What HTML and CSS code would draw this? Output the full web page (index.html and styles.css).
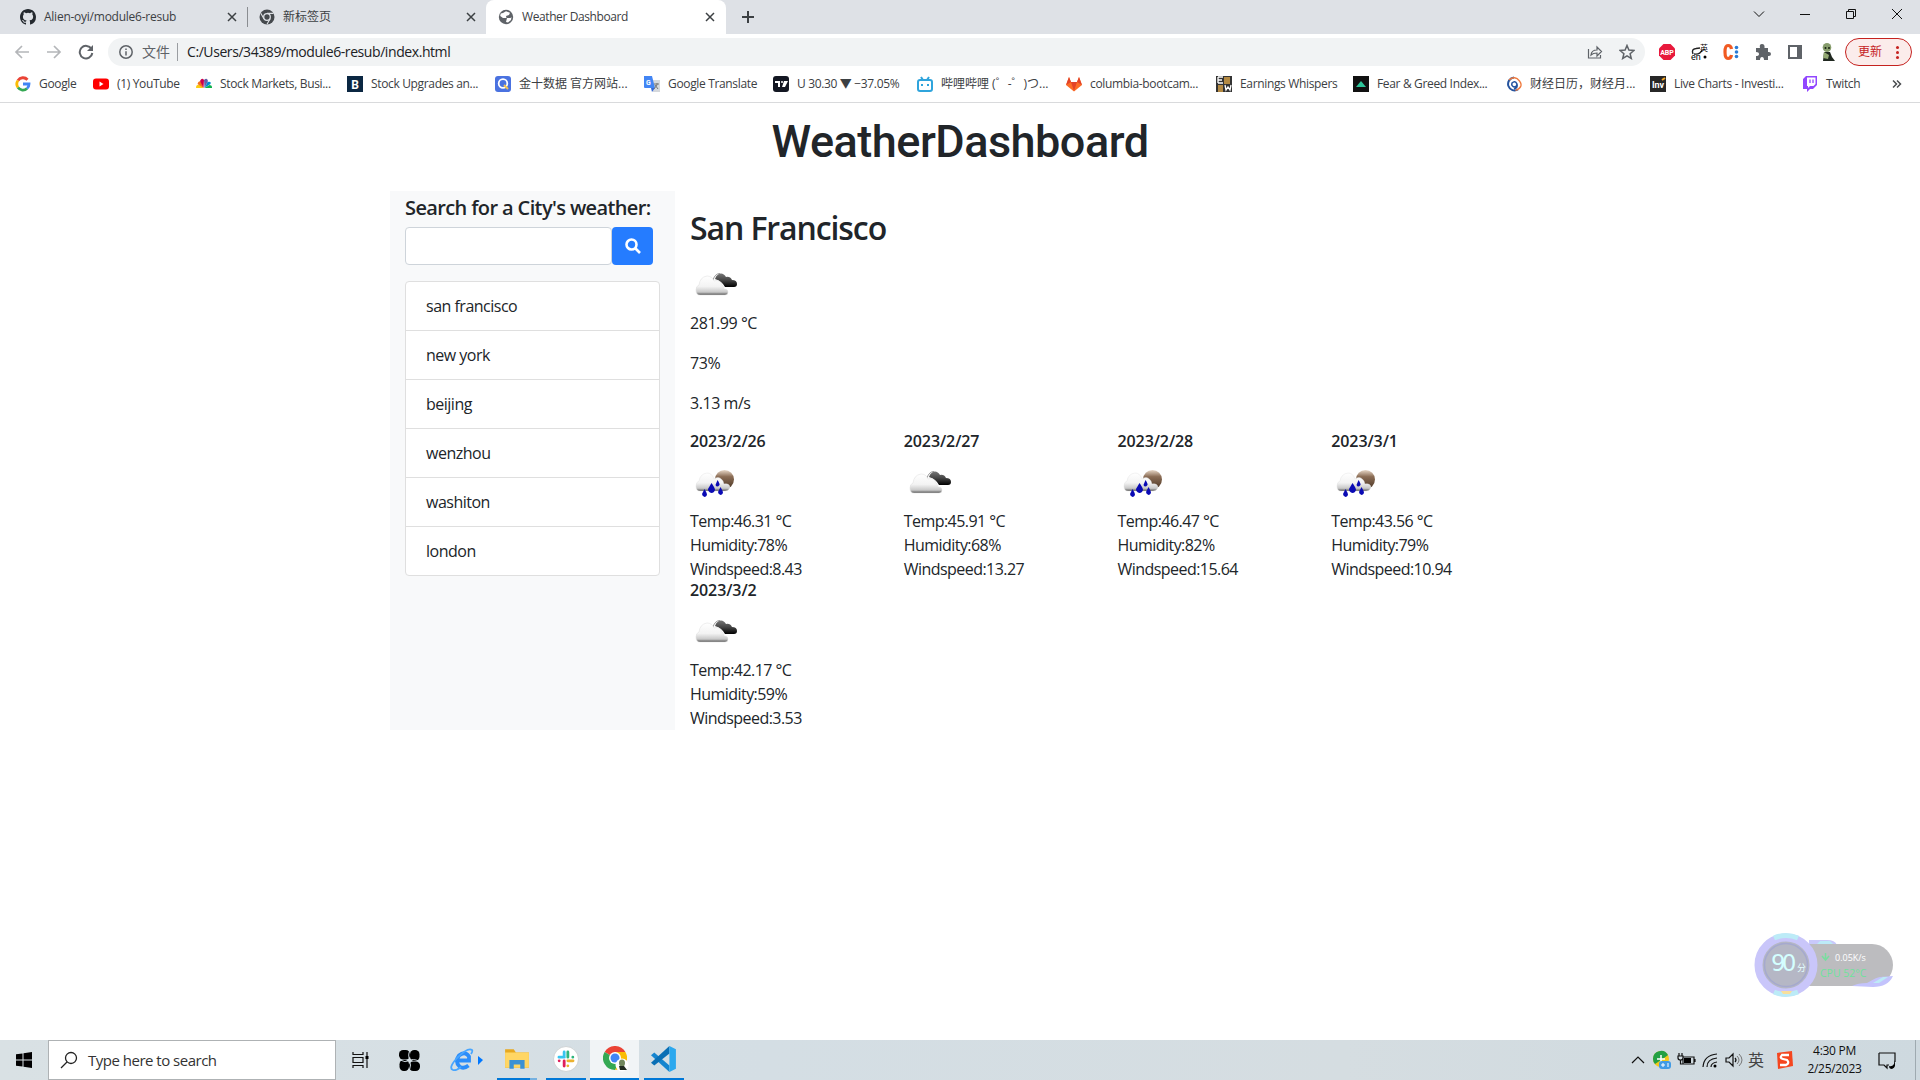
FILE: index.html
```html
<!DOCTYPE html>
<html lang="en">
<head>
<meta charset="utf-8">
<title>Weather Dashboard</title>
<link rel="stylesheet" href="styles.css">
</head>
<body>
<svg class="defs" width="0" height="0">
  <defs>
    <linearGradient id="white-cloud" x1="0" y1="0" x2="0" y2="1"><stop offset="0" stop-color="#fff"/><stop offset=".55" stop-color="#f3f3f3"/><stop offset=".85" stop-color="#c8c8c8"/><stop offset="1" stop-color="#555"/></linearGradient>
    <linearGradient id="dark-cloud" x1="0" y1="0" x2="0" y2="1"><stop offset="0" stop-color="#777"/><stop offset=".5" stop-color="#444"/><stop offset="1" stop-color="#000"/></linearGradient>
    <linearGradient id="moon" x1="0" y1="0" x2="0" y2="1"><stop offset="0" stop-color="#e8d8c8"/><stop offset=".35" stop-color="#8b6d55"/><stop offset="1" stop-color="#4a3524"/></linearGradient>
    <symbol id="clouds" viewBox="0 0 50 50">
      <path d="M25 18 Q27 12.500 31 12.500 Q34 12.500 36 16 Q40 15 42 19 Q47 19 47 23 Q47 26 44 26 H35 Q32 20 25 18Z" fill="url(#dark-cloud)"/>
      <path d="M23 19 Q25 12.500 30 12.500" fill="none" stroke="#999"/>
      <path d="M10 34 Q6 34 6 29 Q6 25 9 24 Q10 16 17 15 Q22 15 24 20 Q30 18 32 24 Q34 26 34 28 Q38 28 38 31 Q38 34 35 34Z" fill="url(#white-cloud)" stroke="#ddd" stroke-width=".5"/>
    </symbol>
    <symbol id="rain" viewBox="0 0 50 50">
      <circle cx="34.500" cy="20.500" r="9.500" fill="url(#moon)"/>
      <path d="M10 32 Q6 32 6 27 Q6 23 9 22 Q10 15 17 14 Q22 14 24 20 Q29 16 33 22 L34 25 Q39 24 40 28 Q39 32 35 32Z" fill="url(#white-cloud)" stroke="#ddd" stroke-width=".4"/>
      <g fill="#0a0ab4"><path d="M21.500 24 Q25 29 25 31 Q24 34 21.500 34 Q18 33 18 30Z"/><path d="M14.500 30 Q17 34 17 36 Q16 38 14.500 38 Q12 37 12 35Z"/><path d="M27.500 21 Q30 25 29.500 26 Q27 29 25.500 26Z"/><path d="M30.500 28 Q33 32 33 34 Q32 36 30.500 36 Q28 35 28 33Z"/></g>
    </symbol>
    <symbol id="chrome" viewBox="0 0 24 24">
      <path d="M12 12 L1.600 6 A12 12 0 0 1 22.400 6 H12Z" fill="#ea4335"/><path d="M12 12 L1.600 6 A12 12 0 0 0 12 24 L17.200 15Z" fill="#34a853"/><path d="M12 6 H22.400 A12 12 0 0 1 12 24 L17.200 15Z" fill="#fbbc04"/><circle cx="12" cy="12" r="6" fill="#fff"/><circle cx="12" cy="12" r="4.500" fill="#4285f4"/>
    </symbol>
  </defs>
</svg>

<header class="browser">
  <div class="tabs">
    <div class="tab tab-one">
      <svg class="fav" viewBox="0 0 16 16"><path fill="#24292f" d="M8 0C3.580 0 0 3.580 0 8c0 3.540 2.290 6.530 5.470 7.590.4.070.55-.17.55-.38v-1.490c-2.010.37-2.530-.49-2.690-.94-.09-.23-.48-.94-.82-1.130-.28-.15-.68-.52-.01-.53.63-.01 1.080.58 1.230.82.72 1.210 1.870.87 2.330.66.07-.52.28-.87.51-1.070-1.780-.2-3.640-.89-3.640-3.950 0-.87.31-1.590.82-2.150-.08-.2-.36-1.020.08-2.120 0 0 .67-.21 2.200.82a7.600 7.600 0 0 1 4 0c1.530-1.040 2.200-.82 2.200-.82.44 1.100.16 1.920.08 2.120.51.56.82 1.270.82 2.150 0 3.070-1.870 3.750-3.650 3.950.29.25.54.73.54 1.480v2.200c0 .21.15.46.55.38A8 8 0 0 0 16 8c0-4.420-3.580-8-8-8z"/></svg>
      <span class="tab-title">Alien-oyi/module6-resub</span>
      <svg class="close" viewBox="0 0 10 10"><path d="M1 1l8 8M9 1l-8 8"/></svg>
    </div>
    <div class="tab tab-two">
      <svg class="fav" viewBox="0 0 16 16"><circle cx="8" cy="8" r="7.500" fill="#45494d"/><circle cx="8" cy="8" r="3.300" fill="#45494d" stroke="#dee1e6" stroke-width="1.300"/><path d="M8 4.400h6.500M4.900 9.700L1.800 4.300M11.100 9.800L8 15.300" stroke="#dee1e6" stroke-width="1.100"/></svg>
      <span class="tab-title cjk">新标签页</span>
      <svg class="close" viewBox="0 0 10 10"><path d="M1 1l8 8M9 1l-8 8"/></svg>
    </div>
    <div class="tab tab-three active">
      <svg class="fav" viewBox="0 0 16 16"><circle cx="8" cy="8" r="7.200" fill="#5f6368"/><path d="M8 2.200l4 1.500-1 2.300-3 1 .5 2H5L2.200 7l.5-2.500L5 4zM9 9h3.500l1-1-.5 3-3 2.500-2-.5z" fill="#fff"/></svg>
      <span class="tab-title">Weather Dashboard</span>
      <svg class="close" viewBox="0 0 10 10"><path d="M1 1l8 8M9 1l-8 8"/></svg>
    </div>
    <svg class="new-tab" viewBox="0 0 14 14"><path d="M7 1v12M1 7h12"/></svg>
    <div class="window-buttons">
      <svg viewBox="0 0 12 12"><path d="M1 3.500l5 5 5-5"/></svg>
      <svg viewBox="0 0 12 12"><path d="M1 6.500h10"/></svg>
      <svg viewBox="0 0 12 12"><path d="M1.500 3.500h7v7h-7zM3.500 3.500v-2h7v7h-2"/></svg>
      <svg viewBox="0 0 12 12"><path d="M1 1l10 10M11 1L1 11"/></svg>
    </div>
  </div>

  <div class="toolbar">
    <div class="nav">
      <svg class="dim" viewBox="0 0 16 16"><path d="M15 8H2M8 2L2 8l6 6"/></svg>
      <svg class="dim" viewBox="0 0 16 16"><path d="M1 8h13M8 2l6 6-6 6"/></svg>
      <svg viewBox="0 0 16 16"><path d="M13.500 5A6.300 6.300 0 1 0 14.300 9"/><path d="M15 1v6H9z" fill="#5f6368" stroke="none"/></svg>
    </div>
    <div class="omnibox">
      <svg class="info" viewBox="0 0 16 16"><circle cx="8" cy="8" r="6.200"/><path d="M8 7.300V11.500M8 4.500v1.500"/></svg>
      <span class="scheme">文件</span>
      <span class="url">C:/Users/34389/module6-resub/index.html</span>
      <svg class="action" viewBox="0 0 16 16"><path d="M1.500 5v9h12v-3M4 11q.5-5 6-5V3l4.500 4.500L10 12V9q-4 0-6 2z"/></svg>
      <svg class="action star" viewBox="0 0 16 16"><path d="M8 1.500l1.900 4.600 5 .4-3.800 3.200 1.200 4.800L8 11.900l-4.300 2.600 1.200-4.800L1.100 6.500l5-.4z"/></svg>
    </div>
    <div class="extensions">
      <svg viewBox="0 0 18 18"><path d="M5.500 1h7L17 5.500v7L12.500 17h-7L1 12.500v-7z" fill="#e8193c"/><text x="9" y="11.800" class="abp">ABP</text></svg>
      <svg viewBox="0 0 18 18"><path d="M3 11Q1 6 6 5.500L10 5M4 11q6 1 8-4" stroke="#222" stroke-width="1.400" fill="none"/><text x="10" y="8" class="hanzi">英</text><text x="1" y="17" class="en">en</text><circle cx="15" cy="14" r="1.500"/></svg>
      <svg viewBox="0 0 18 18"><path d="M9.500 6Q9 2.500 6 2.500 3 2.500 3 9t3 6.500q3 0 3.500-3.500" fill="none" stroke="#f15a22" stroke-width="3.200"/><g fill="#2a7bd5"><circle cx="14.500" cy="4.500" r="1.800"/><circle cx="14.500" cy="9" r="1.800"/><circle cx="14.500" cy="13.500" r="1.800"/></g></svg>
      <svg viewBox="0 0 18 18"><path fill="#5f6368" d="M2 5h4Q5 1 8 1t2.500 4H14v4q3-.5 3 2t-3 2v4h-4q0-3-2-3t-2 3H2v-4q3 0 3-2T2 9z"/></svg>
      <svg viewBox="0 0 18 18"><path d="M3 3h12v12H3z" fill="none" stroke="#5f6368" stroke-width="2"/><path d="M11 3h4v12h-4z" fill="#5f6368"/></svg>
      <svg viewBox="0 0 18 18"><ellipse cx="9" cy="4.500" rx="4.300" ry="4.500" fill="#869c6c"/><path d="M6 9h6l2 5 3 4H5z" fill="#202820"/><path d="M6 9l5 3-1 4-5-1z" fill="#93a873"/><circle cx="7.500" cy="5" r="1" fill="#15200f"/><circle cx="11" cy="5" r="1" fill="#15200f"/></svg>
    </div>
    <div class="update"><span>更新</span><i></i></div>
  </div>

  <nav class="bookmarks">
    <a><svg viewBox="0 0 16 16" fill="none" stroke-width="2.800"><path d="M3 4.500a6 6 0 0 1 9.500-.8" stroke="#ea4335"/><path d="M3 11.500a6 6 0 0 1 0-7" stroke="#fbbc04"/><path d="M12 12.500a6 6 0 0 1-9-1" stroke="#34a853"/><path d="M8 8h6q0 3-2 4.500" stroke="#4285f4"/></svg>Google</a>
    <a><svg viewBox="0 0 16 16"><rect y="2.500" width="16" height="11" rx="3" fill="#f00"/><path d="M6.500 5.500v5l4-2.500z" fill="#fff"/></svg>(1) YouTube</a>
    <a><svg viewBox="0 0 16 16"><path d="M7.500 12L0 12q0-4 4-3z" fill="#fccc12"/><path d="M7.500 12L1.500 8q1-4 4-2z" fill="#f37021"/><path d="M7.500 12L4 5q2-4 4-1z" fill="#cc004c"/><path d="M8.500 12L8 4q3-3 4 1z" fill="#6460aa"/><path d="M8.500 12l3-6q4-1 3 2z" fill="#0089d0"/><path d="M8.500 12l5-3q3 0 2.500 3z" fill="#0db14b"/></svg>Stock Markets, Busi...</a>
    <a><svg viewBox="0 0 16 16"><path fill="#0b2742" d="M0 0h16v16H0z"/><text x="8" y="12.500" class="mark">B</text></svg>Stock Upgrades an...</a>
    <a class="cjk"><svg viewBox="0 0 16 16"><rect width="16" height="16" rx="3" fill="#4a72e0"/><circle cx="8" cy="7.500" r="4.300" fill="none" stroke="#fff" stroke-width="1.800"/><path d="M9 9l4 4" stroke="#f6c44e" stroke-width="2"/></svg>金十数据 官方网站...</a>
    <a><svg viewBox="0 0 16 16"><path fill="#d5d8dc" d="M6 4h10v12H9z"/><path fill="#4285f4" d="M0 0h8l3 12H1q-1 0-1-1z"/><path fill="#3367d6" d="M7 12h4l-3 4z"/><text x="4.500" y="9" class="tiny">G</text><path d="M10 8h5m-2-1v2l-3 4m1-4l3 4" stroke="#777" fill="none"/></svg>Google Translate</a>
    <a><svg viewBox="0 0 16 16"><rect width="16" height="16" rx="3" fill="#131722"/><path d="M2 5h5v6H5V7H2zM11 5h4l-3 6H9z" fill="#fff"/><circle cx="9" cy="6" r="1" fill="#fff"/></svg>U 30.30 ▼ −37.05%</a>
    <a class="cjk"><svg viewBox="0 0 16 16" fill="none" stroke="#2fa4dc" stroke-width="2"><rect x="1" y="4" width="14" height="11" rx="2"/><path d="M4 1l2 3M12 1l-2 3M5 8v2M11 8v2"/></svg>哔哩哔哩 (゜-゜)つ...</a>
    <a><svg viewBox="0 0 16 16"><path d="M0 9l3-8 2 5h6l2-5 3 8-8 6.500z" fill="#fc6d26"/><path d="M5 6h6l-3 9z" fill="#e24329"/><path d="M0 9l3-8 2 5zM16 9l-3-8-2 5z" fill="#e24329"/></svg>columbia-bootcam...</a>
    <a><svg viewBox="0 0 16 16"><path fill="#333" d="M0 0h16v16H0z"/><path fill="#b48a43" d="M8 1h6v7H8zM2 9h5v7H2z"/><path d="M2 1h5M2 4h4M2 7h5M2 1v6M9 9l1 5 2-3 2 3 1-5" stroke="#fff" fill="none" stroke-width="1.300"/></svg>Earnings Whispers</a>
    <a><svg viewBox="0 0 16 16"><path fill="#111" d="M0 0h16v16H0z"/><path d="M8 5l5 6H3z" fill="#2dc59a"/></svg>Fear &amp; Greed Index...</a>
    <a class="cjk"><svg viewBox="0 0 16 16" fill="none" stroke-width="2"><path d="M12 13.500a6.500 6.500 0 1 1-4-12" stroke="#25549f"/><path d="M3 4q6-5 10.500 1t-4 9.500" stroke="#ef793d" stroke-width="1.300"/><path d="M11 8q0 3-3 3-3-1-2-4 3-3 5 1 1 4-3 5" stroke="#25549f" stroke-width="1.500"/></svg>财经日历，财经月...</a>
    <a><svg viewBox="0 0 16 16"><path fill="#272727" d="M0 0h16v16H0z"/><text x="8" y="12" class="inv">Inv</text><path d="M12 4l3-2" stroke="#f5a623" stroke-width="2"/></svg>Live Charts - Investi...</a>
    <a><svg viewBox="0 0 16 16"><path d="M4 0h11v9l-4 4H8l-3 3v-3H1V3z" fill="#9146ff"/><path d="M5 1.500h8.500V8l-2 2H8l-2 2v-2H5z" fill="#fff"/><path d="M8 3.500v3.500M11 3.500v3.500" stroke="#9146ff" stroke-width="1.300"/></svg>Twitch</a>
    <svg class="more" viewBox="0 0 10 10"><path d="M1 1.500L4.500 5 1 8.500M5 1.500L8.500 5 5 8.500"/></svg>
  </nav>
</header>

<main class="page">
  <h1>WeatherDashboard</h1>
  <div class="columns">
    <aside>
      <h5>Search for a City's weather:</h5>
      <div class="search">
        <input type="text" aria-label="City">
        <button aria-label="Search"><svg viewBox="0 0 16 16"><circle cx="6.500" cy="6.500" r="5"/><path d="M10 10l5 5"/></svg></button>
      </div>
      <ul>
        <li>san francisco</li><li>new york</li><li>beijing</li><li>wenzhou</li><li>washiton</li><li>london</li>
      </ul>
    </aside>
    <section class="weather">
      <h2>San Francisco</h2>
      <svg class="icon"><use href="#clouds"/></svg>
      <p>281.99 °C</p>
      <p>73%</p>
      <p>3.13 m/s</p>
      <div class="forecast">
        <article><h6>2023/2/26</h6><svg class="icon"><use href="#rain"/></svg><div>Temp:46.31 °C</div><div>Humidity:78%</div><div>Windspeed:8.43</div></article>
        <article><h6>2023/2/27</h6><svg class="icon"><use href="#clouds"/></svg><div>Temp:45.91 °C</div><div>Humidity:68%</div><div>Windspeed:13.27</div></article>
        <article><h6>2023/2/28</h6><svg class="icon"><use href="#rain"/></svg><div>Temp:46.47 °C</div><div>Humidity:82%</div><div>Windspeed:15.64</div></article>
        <article><h6>2023/3/1</h6><svg class="icon"><use href="#rain"/></svg><div>Temp:43.56 °C</div><div>Humidity:79%</div><div>Windspeed:10.94</div></article>
        <article><h6>2023/3/2</h6><svg class="icon"><use href="#clouds"/></svg><div>Temp:42.17 °C</div><div>Humidity:59%</div><div>Windspeed:3.53</div></article>
      </div>
    </section>
  </div>
</main>

<div class="monitor">
  <svg viewBox="0 0 142 66">
    <path d="M55 3h18q8 0 10 5H55z" fill="#c9c9fb"/><path d="M66 4h10l3 3H63z" fill="#bcebf8"/>
    <path d="M45 7h73a21 21 0 0 1 0 42H45z" fill="#bcbcbf"/>
    <path d="M98 49q6-3 15-3 10-6 13-6l13-1q-5 11-20 11z" fill="#c3c3fc"/><path d="M119 46l10-6h5l-9 6z" fill="#bdeaf6"/>
    <circle cx="32" cy="28" r="27.500" fill="#b5b7c5" stroke="#c9c6fa" stroke-width="8"/>
    <path d="M20 1q12-5 24 0M20 55q12 5 24 0" fill="none" stroke="#bcebf7" stroke-width="5"/>
    <circle cx="32" cy="28" r="21.500" fill="none" stroke="#a5a9ce" stroke-width="1.500"/>
    <path d="M27 54h11l-2 3h-7z" fill="#f8df9c"/>
    <path d="M71.500 16v6M68 19l3.500 4 3.500-4" fill="none" stroke="#79dd9f" stroke-width="1.500"/>
    <text x="17" y="34" class="score">90</text><text x="43" y="34" class="unit">分</text>
    <text x="81" y="24" class="speed">0.05K/s</text><text x="66" y="40" class="cpu">CPU 52°C</text>
  </svg>
</div>

<footer class="taskbar">
  <div class="start"><svg viewBox="0 0 16 16"><path d="M0 2.300L6.500 1.400v6.100H0zM7.500 1.200L16 0v7.500H7.500zM0 8.500h6.500v6.100L0 13.700zM7.500 8.500H16V16l-8.500-1.200z"/></svg></div>
  <div class="find"><svg viewBox="0 0 18 18"><circle cx="11" cy="7" r="5.500"/><path d="M7 11l-6 6"/></svg><span>Type here to search</span></div>
  <div class="apps">
    <div class="app"><svg class="small" viewBox="0 0 18 18"><path d="M1.500 1v2.500h10V1M1.500 17v-2.500h10V17M1.500 6.500h10v5h-10zM15.500 1v16" fill="none" stroke="#111" stroke-width="1.200"/><path d="M14 5h3v3h-3z"/></svg></div>
    <div class="app"><svg class="pinwheel" viewBox="0 0 20 20"><rect width="10.500" height="9" rx="4"/><rect x="10.500" width="9" height="10.500" rx="4"/><rect x=".5" y="9.500" width="9" height="10.500" rx="4"/><rect x="9.500" y="11" width="10.500" height="9" rx="4"/><path d="M10 1Q8 7 11 10M19 10.500Q13 8 10 10M10 19q2-5 0-9M1 9.500q5 3 9 .5" stroke="#d5dee4" stroke-width=".9" fill="none"/></svg></div>
    <div class="app"><svg class="ie" viewBox="0 0 34 24"><path d="M18.500 17.500q-5 4-9 1-5-5-.5-11 6-5 10 1v4H7.500" fill="none" stroke="#2b8dfa" stroke-width="3.800"/><path d="M3 22q-5-2 4-12Q18-1 22 2q1 1-1 4M3 22q3 1 8-3" fill="none" stroke="#48a6ff" stroke-width="1.800"/><path d="M28 8l5 4-5 5z" fill="#0078ff"/></svg></div>
    <div class="app open part"><svg viewBox="0 0 24 24"><path d="M1 3h8l2 3h12v14H1z" fill="#e7a921"/><path d="M1 6h22v14H1z" fill="#ffd664"/><path d="M5 13h14v8h-4v-4H9v4H5z" fill="#3b91d4"/></svg></div>
    <div class="app open"><svg viewBox="0 0 24 24"><circle cx="12" cy="12" r="11.500" fill="#fff" stroke="#c5cacc" stroke-width=".7"/><g stroke-width="2.600" stroke-linecap="round"><path d="M10.300 5.500v4.500M5.500 10.300h5" stroke="#36c5f0"/><path d="M13.700 5.500v4.800M18.300 10.300h0" stroke="#2eb67d"/><path d="M13.700 13.700h4.800M13.700 18.300v0" stroke="#ecb22e"/><path d="M10.300 13.700v4.800M5.700 13.700h0" stroke="#e01e5a"/></g></svg></div>
    <div class="app open current"><svg viewBox="0 0 26 26"><use href="#chrome" width="24" height="24"/><circle cx="19" cy="19" r="6.500" fill="#fff"/><ellipse cx="19" cy="17" rx="3" ry="3.500" fill="#71865d"/><path d="M16 20h5l3 4h-7z" fill="#222b20"/></svg></div>
    <div class="app open"><svg viewBox="0 0 24 24"><path d="M3 6l14 12v6L0 8.500z" fill="#1685cf"/><path d="M17 0v7L3 18l-3-2.500z" fill="#0a6fb5"/><path d="M17 0l6 3v18l-6 3z" fill="#2ba8ee"/></svg></div>
  </div>
  <div class="tray">
    <svg viewBox="0 0 20 20"><path d="M4 13l6-6 6 6" class="line"/></svg>
    <svg viewBox="0 0 20 20"><circle cx="9" cy="9" r="8" fill="#f3c91c"/><path d="M1 9a8 8 0 0 1 15-4L12 8 3 14q-2-2-2-5z" fill="#22a044"/><path d="M9 5v8M5 9h8" stroke="#fff" stroke-width="1.500"/><rect x="7" y="11" width="12" height="8" rx="3" fill="#409be5"/><path d="M9 15h4M11 13v4M15 14h2M15 16h2" stroke="#fff"/></svg>
    <svg viewBox="0 0 20 20"><path d="M7 7h11v7H7zM19 9v3M3 3v3M6 3v3M2 6h5v2q0 2-2.500 2Q2 10 2 8zM4.500 10v4H7" class="line"/><path d="M8 8h7v5H8z"/></svg>
    <svg viewBox="0 0 20 20"><path d="M3 17Q4 5 17 4M7 17q0-8 10-9M11 17q0-4 6-5" class="line"/><circle cx="15" cy="16" r="1.500"/></svg>
    <svg viewBox="0 0 20 20"><path d="M2 8h3l4-4v12l-4-4H2zM11 8q2 2 0 4" class="line"/><path d="M13 6q4 4 0 8M15 4q6 6 0 12" fill="none" stroke="#777"/></svg>
    <span class="ime">英</span>
    <svg viewBox="0 0 20 20"><path d="M3 3l15-2 1 15-15 3z" fill="#f5461f"/><path d="M15 5H8Q5 8 9 9l4 1q3 3-1 5H6" fill="none" stroke="#fff" stroke-width="2.300"/></svg>
    <div class="clock"><span>4:30 PM</span><span>2/25/2023</span></div>
    <svg viewBox="0 0 20 20"><path d="M2 3h16v9M2 3v12h5l3 3v-3h2" class="line"/><path d="M17 10v4q-2 3-5 2 0 3 3 3 5-2 2-9z"/></svg>
    <i class="edge"></i>
  </div>
</footer>
</body>
</html>
```
FILE: styles.css
```css
* { box-sizing: border-box; }
body { margin: 0; height: 1080px; overflow: hidden; display: flex; flex-direction: column; background: #fff; color: #212529; font: 16px/24px "Open Sans", "Noto Sans CJK SC", sans-serif; }
svg { display: block; flex: none; }
.defs { position: absolute; }
h1, h2, h5, h6, p, ul { margin: 0; padding: 0; }

.browser { height: 103px; border-bottom: 1px solid #d9dadc; font-size: 12px; letter-spacing: -.35px; color: #3c4043; }
.tabs { display: flex; align-items: center; height: 34px; background: #dee1e6; }
.tab { display: flex; align-items: center; height: 34px; letter-spacing: -.25px; }
.tab-one { width: 248px; padding: 0 10px 0 20px; border-right: 1px solid #8a8d91; height: 20px; }
.tab-two { width: 238px; padding: 0 10px 0 11px; }
.tab-three { width: 240px; padding: 0 11px 0 12px; letter-spacing: -.4px; }
.cjk { letter-spacing: 0; }
.active { background: #fff; border-radius: 8px 8px 0 0; }
.fav { width: 16px; height: 16px; margin-right: 8px; }
.tab-title { flex: 1; white-space: nowrap; }
.close { width: 10px; height: 10px; stroke: #3c4043; stroke-width: 1.5; }
.new-tab { width: 14px; height: 14px; margin-left: 15px; stroke: #3c4043; stroke-width: 2; }
.window-buttons { display: flex; gap: 34px; margin: -6px 17px 0 auto; }
.window-buttons svg { width: 12px; height: 12px; fill: none; stroke: #111; }

.toolbar { display: flex; align-items: center; height: 36px; padding: 0 8px 0 14px; }
.nav { display: flex; gap: 16px; width: 94px; }
.nav svg { width: 16px; height: 16px; fill: none; stroke: #5f6368; stroke-width: 2; }
.nav .dim { stroke: #b4b6b9; stroke-width: 1.7; }
.omnibox { display: flex; align-items: center; width: 1537px; height: 28px; padding: 0 10px; border-radius: 14px; background: #f1f3f4; font-size: 14px; }
.info { width: 16px; height: 16px; fill: none; stroke: #5f6368; stroke-width: 1.5; }
.scheme { width: 44px; padding-left: 8px; border-right: 1px solid #9a9da1; line-height: 18px; letter-spacing: 0; color: #5f6368; }
.url { flex: 1; padding-left: 9px; color: #202124; letter-spacing: -.42px; }
.action { width: 16px; height: 16px; margin-left: 16px; fill: none; stroke: #5f6368; stroke-width: 1.2; }
.star { stroke-width: 1.5; }
.extensions { display: flex; gap: 14px; padding-left: 13px; }
.extensions svg { width: 18px; height: 18px; }
.abp { font: bold 7px Roboto, sans-serif; letter-spacing: 0; text-anchor: middle; fill: #fff; }
.en { font: 9px Roboto, sans-serif; letter-spacing: 0; }
.hanzi { font: 8px "Noto Sans CJK SC", sans-serif; letter-spacing: 0; }
.update { display: flex; align-items: center; justify-content: space-between; width: 67px; height: 28px; margin-left: auto; padding: 0 12px; border: 1px solid #c5221f; border-radius: 14px; background: #fbeceb; color: #c5221f; letter-spacing: 0; }
.update i { width: 3px; height: 3px; border-radius: 50%; background: #c5221f; box-shadow: 0 -5px #c5221f, 0 5px #c5221f; }

.bookmarks { display: grid; grid-template-columns: 78px 103px 151px 148px 149px 129px 144px 149px 150px 137px 153px 144px 152px 90px 20px; align-items: center; height: 28px; padding-left: 15px; letter-spacing: -.34px; }
.bookmarks a { display: flex; align-items: center; gap: 8px; white-space: nowrap; }
.bookmarks svg { width: 16px; height: 16px; }
.bookmarks .cjk { letter-spacing: 0; }
.mark, .inv, .tiny { font: bold 12px Roboto, sans-serif; letter-spacing: 0; fill: #fff; text-anchor: middle; }
.inv { font-size: 9px; }
.tiny { font-size: 7px; }
.bookmarks .more { width: 10px; height: 10px; fill: none; stroke: #4a4d50; stroke-width: 1.5; }

.page { flex: 1; width: 1140px; margin: 0 auto; }
h1 { height: 88px; padding-top: 12px; text-align: center; font: 500 45px/54px Roboto, sans-serif; letter-spacing: -.5px; }
.columns { display: flex; height: 539px; }
aside { flex: none; width: 285px; padding: 5px 15px; background: #f8f9fa; }
h5 { height: 31px; font-size: 20px; line-height: 24px; font-weight: 600; letter-spacing: -.62px; white-space: nowrap; }
.search { display: flex; height: 38px; }
.search input { width: 207px; border: 1px solid #ced4da; border-radius: 4px; background: #fff; }
.search button { display: grid; place-items: center; width: 41px; padding: 0; border: 0; border-radius: 4px; background: #257cff; }
.search svg { width: 16px; height: 16px; fill: none; stroke: #fff; stroke-width: 2.6; }
aside ul { margin-top: 16px; border: 1px solid #dfdfdf; border-radius: 4px; background: #fff; list-style: none; }
aside li { height: 49px; padding: 12px 20px; letter-spacing: -.5px; }
aside li + li { border-top: 1px solid #dfdfdf; }
aside li:first-child { height: 48px; }
.weather { flex: none; width: 870px; padding: 18px 0 0 15px; letter-spacing: -.45px; }
h2 { height: 52px; font-size: 32px; line-height: 37px; font-weight: 600; letter-spacing: -1.1px; }
.icon { width: 50px; height: 50px; }
.weather p { margin-bottom: 16px; }
.forecast { display: grid; grid-template-columns: repeat(4, 213.75px); padding-top: 1px; letter-spacing: -.55px; }
h6 { height: 27px; font-size: 16px; line-height: 19px; font-weight: 600; letter-spacing: -.1px; }
article { height: 149.2px; }

.monitor { position: absolute; left: 1754px; top: 937px; width: 142px; height: 66px; letter-spacing: 0; }
.monitor svg { overflow: visible; }
.score { font: 23px "DejaVu Sans", sans-serif; letter-spacing: -4px; fill: #d4ffff; }
.unit { font: 9px "Noto Sans CJK SC", sans-serif; fill: #e4ffff; }
.speed { font: 9px "Open Sans", sans-serif; fill: #fff; }
.cpu { font: 500 10.5px "Open Sans", sans-serif; fill: #6fe29b; }

.taskbar { display: flex; height: 40px; background: linear-gradient(90deg, #d9e1e4, #d4dee4 40%, #d5dde1 70%, #ced9df); }
.start { display: grid; place-items: center; width: 48px; }
.start svg { width: 16px; height: 16px; }
.find { display: flex; align-items: center; gap: 10px; width: 288px; padding-left: 11px; border: 1px solid #aeb2b4; background: #fff; color: #333; font-size: 15px; letter-spacing: -.5px; }
.find svg { width: 18px; height: 18px; fill: none; stroke: #222; stroke-width: 1.3; }
.apps { display: grid; grid-template-columns: 48px 51px 57px 49px 49px 49px 49px; }
.app { display: grid; place-items: center; border: 0 solid #0078d7; }
.app svg { height: 26px; max-width: 34px; }
.app svg.small { width: 19px; height: 18px; }
.app svg.pinwheel { width: 21px; height: 21px; }
.app svg.ie { margin-left: 6px; }
.open { border-bottom-width: 2px; margin: 0 4px 0 5px; }
.part { border-image: linear-gradient(90deg, #0078d7 82%, #76b1e0 82%) 1; }
.current { margin: 0; padding-left: 2px; background: #f1f4f6; }
.tray { display: flex; align-items: center; gap: 4px; margin-left: auto; font-size: 12px; letter-spacing: -.1px; color: #111; }
.tray svg { width: 20px; height: 20px; }
.line { fill: none; stroke: #111; stroke-width: 1.2; }
.ime { font-size: 16px; color: #444; width: 20px; margin-right: 2px; }
.clock { display: flex; flex-direction: column; align-items: center; width: 67px; margin: 0 5px 0 3px; line-height: 18px; letter-spacing: -.3px; }
.edge { align-self: stretch; width: 5px; margin-left: 14px; border-left: 1px solid #9faab0; }
```
